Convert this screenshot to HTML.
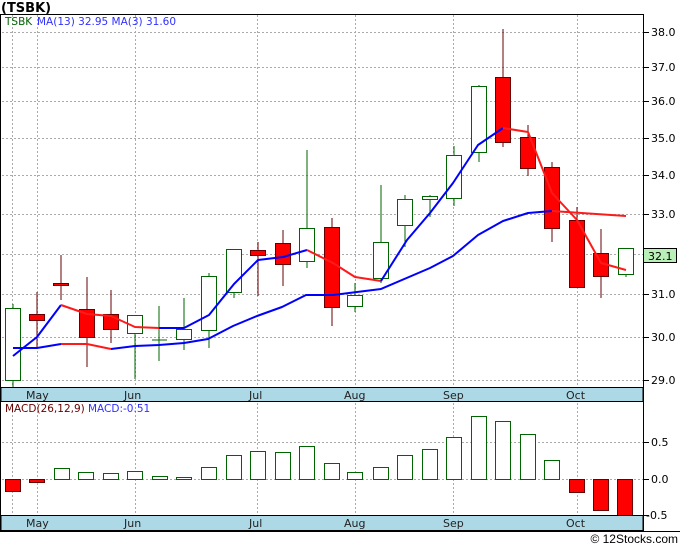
<!DOCTYPE html>
<html><head><meta charset="utf-8"><style>
body{margin:0;background:#fff;width:680px;height:546px;overflow:hidden;font-family:"DejaVu Sans","Liberation Sans",sans-serif}
svg text{font-family:"DejaVu Sans","Liberation Sans",sans-serif}
</style></head><body>
<svg width="680" height="546" viewBox="0 0 680 546" xmlns="http://www.w3.org/2000/svg">
<rect x="0" y="0" width="680" height="546" fill="#fff"/>
<text x="1" y="12" font-size="13" font-weight="bold" fill="#000">(TSBK)</text>
<g stroke="#aaa" stroke-dasharray="2,2" stroke-width="1">
<line x1="2" x2="643" y1="32.5" y2="32.5"/><line x1="2" x2="643" y1="67.5" y2="67.5"/><line x1="2" x2="643" y1="101.5" y2="101.5"/><line x1="2" x2="643" y1="138.5" y2="138.5"/><line x1="2" x2="643" y1="175.5" y2="175.5"/><line x1="2" x2="643" y1="214.5" y2="214.5"/><line x1="2" x2="643" y1="254.5" y2="254.5"/><line x1="2" x2="643" y1="294.5" y2="294.5"/><line x1="2" x2="643" y1="337.5" y2="337.5"/><line x1="2" x2="643" y1="380.5" y2="380.5"/>
<line x1="2" x2="643" y1="442.5" y2="442.5"/><line x1="2" x2="643" y1="479.5" y2="479.5"/>
<g>
<line x1="12.5" x2="12.5" y1="15" y2="530"/><line x1="37.5" x2="37.5" y1="15" y2="530"/><line x1="135.5" x2="135.5" y1="15" y2="530"/><line x1="257.5" x2="257.5" y1="15" y2="530"/><line x1="355.5" x2="355.5" y1="15" y2="530"/><line x1="453.5" x2="453.5" y1="15" y2="530"/><line x1="577.5" x2="577.5" y1="15" y2="530"/>
</g></g>
<text x="5" y="25" font-size="10.5" fill="#006400">TSBK</text>
<text x="37" y="25" font-size="10.5" fill="#3030ff">MA(13)  32.95  MA(3)  31.60</text>
<g stroke-width="1">
<g stroke="#006400" fill="#fff">
<line x1="13" x2="13" y1="304" y2="387"/><rect x="5.5" y="308.5" width="15" height="72"/>
<line x1="135" x2="135" y1="315" y2="379"/><rect x="127.5" y="315.5" width="15" height="18"/>
<line x1="159" x2="159" y1="306" y2="361"/><line x1="152" x2="167" y1="340" y2="340"/>
<line x1="184" x2="184" y1="298" y2="350"/><rect x="176.5" y="329.5" width="15" height="10"/>
<line x1="209" x2="209" y1="273" y2="348"/><rect x="201.5" y="276.5" width="15" height="54"/>
<line x1="234" x2="234" y1="249" y2="298"/><rect x="226.5" y="249.5" width="15" height="43"/>
<line x1="307" x2="307" y1="150" y2="268"/><rect x="299.5" y="228.5" width="15" height="33"/>
<line x1="355" x2="355" y1="283" y2="312"/><rect x="347.5" y="295.5" width="15" height="11"/>
<line x1="381" x2="381" y1="185" y2="283"/><rect x="373.5" y="242.5" width="15" height="36"/>
<line x1="405" x2="405" y1="195" y2="247"/><rect x="397.5" y="199.5" width="15" height="26"/>
<line x1="430" x2="430" y1="195" y2="217"/><rect x="422.5" y="196.5" width="15" height="3"/>
<line x1="454" x2="454" y1="146" y2="206"/><rect x="446.5" y="155.5" width="15" height="43"/>
<line x1="479" x2="479" y1="85" y2="162"/><rect x="471.5" y="86.5" width="15" height="66"/>
<line x1="626" x2="626" y1="248" y2="277"/><rect x="618.5" y="248.5" width="15" height="26"/>
</g>
<g stroke="#600" fill="#f00">
<line x1="37" x2="37" y1="292" y2="347"/><rect x="29.5" y="314.5" width="15" height="6"/>
<line x1="61" x2="61" y1="255" y2="300"/><rect x="53.5" y="283.5" width="15" height="2"/>
<line x1="87" x2="87" y1="277" y2="367"/><rect x="79.5" y="309.5" width="15" height="28"/>
<line x1="111" x2="111" y1="290" y2="343"/><rect x="103.5" y="314.5" width="15" height="15"/>
<line x1="258" x2="258" y1="242" y2="296"/><rect x="250.5" y="250.5" width="15" height="5"/>
<line x1="283" x2="283" y1="230" y2="286"/><rect x="275.5" y="243.5" width="15" height="21"/>
<line x1="332" x2="332" y1="218" y2="326"/><rect x="324.5" y="227.5" width="15" height="80"/>
<line x1="503" x2="503" y1="29" y2="147"/><rect x="495.5" y="77.5" width="15" height="65"/>
<line x1="528" x2="528" y1="125" y2="176"/><rect x="520.5" y="137.5" width="15" height="31"/>
<line x1="552" x2="552" y1="162" y2="242"/><rect x="544.5" y="167.5" width="15" height="61"/>
<line x1="577" x2="577" y1="207" y2="288"/><rect x="569.5" y="220.5" width="15" height="67"/>
<line x1="601" x2="601" y1="229" y2="298"/><rect x="593.5" y="253.5" width="15" height="23"/>
</g></g>
<g fill="none" stroke-width="2" stroke-linejoin="round">
<polyline stroke="#0000ff" points="13,356 37,337 61,305"/>
<polyline stroke="#ff1a1a" points="61,305 87,314 111,316 135,327 159,328"/>
<polyline stroke="#0000ff" points="159,328 184,328 209,315 234,284 258,260 283,257 307,250"/>
<polyline stroke="#ff1a1a" points="307,250 333,263 355,277 381,281"/>
<polyline stroke="#0000ff" points="381,281 407,240 430,213 453,183 478,145 503,128"/>
<polyline stroke="#ff1a1a" points="503,128 528,132 552,193 577,220 601,263 626,270"/>
<polyline stroke="#0000ff" points="13,348 37,348 61,344"/>
<polyline stroke="#ff1a1a" points="61,344 87,344 111,349"/>
<polyline stroke="#0000ff" points="111,349 135,346 159,345 184,343 208,339 233,326 257,316 282,307 306,295 333,295 381,289 430,268 453,256 478,235 503,221 528,213 552,211"/>
<polyline stroke="#ff1a1a" points="552,211 626,216"/>
</g>
<g stroke="#006400" fill="#fff">
<rect x="54.5" y="468.5" width="15" height="11"/><rect x="78.5" y="472.5" width="15" height="7"/><rect x="103.5" y="473.5" width="15" height="6"/><rect x="127.5" y="471.5" width="15" height="8"/><rect x="152.5" y="476.5" width="15" height="3"/><rect x="176.5" y="477.5" width="15" height="2"/><rect x="201.5" y="467.5" width="15" height="12"/><rect x="226.5" y="455.5" width="15" height="24"/><rect x="250.5" y="451.5" width="15" height="28"/><rect x="275.5" y="452.5" width="15" height="27"/><rect x="299.5" y="446.5" width="15" height="33"/><rect x="324.5" y="463.5" width="15" height="16"/><rect x="347.5" y="472.5" width="15" height="7"/><rect x="373.5" y="467.5" width="15" height="12"/><rect x="397.5" y="455.5" width="15" height="24"/><rect x="422.5" y="449.5" width="15" height="30"/><rect x="446.5" y="437.5" width="15" height="42"/><rect x="471.5" y="416.5" width="15" height="63"/><rect x="495.5" y="421.5" width="15" height="58"/><rect x="520.5" y="434.5" width="15" height="45"/><rect x="544.5" y="460.5" width="15" height="19"/>
</g>
<g stroke="#600" fill="#f00">
<rect x="5.5" y="479.5" width="15" height="12"/><rect x="29.5" y="479.5" width="15" height="3"/><rect x="569.5" y="479.5" width="15" height="13"/><rect x="593.5" y="479.5" width="15" height="31"/><rect x="617.5" y="479.5" width="15" height="36"/>
</g>
<text x="5" y="412" font-size="10.5" fill="#600">MACD(26,12,9)</text>
<text x="88" y="412" font-size="10.5" fill="#3030ff">MACD:-0.51</text>
<rect x="1" y="387.5" width="642" height="14" fill="#add8e6" stroke="#000"/>
<rect x="1" y="515.5" width="642" height="15" fill="#add8e6" stroke="#000"/>
<g font-size="11" fill="#222">
<text x="26" y="399">May</text><text x="124" y="399">Jun</text><text x="249" y="399">Jul</text><text x="344" y="399">Aug</text><text x="443" y="399">Sep</text><text x="566" y="399">Oct</text>
<text x="26" y="527">May</text><text x="124" y="527">Jun</text><text x="249" y="527">Jul</text><text x="344" y="527">Aug</text><text x="443" y="527">Sep</text><text x="566" y="527">Oct</text>
</g>
<line x1="0.5" x2="0.5" y1="14" y2="531" stroke="#000"/>
<line x1="0" x2="643" y1="14.5" y2="14.5" stroke="#000"/>
<line x1="643.5" x2="643.5" y1="14" y2="531" stroke="#000"/>
<line x1="0" x2="680" y1="531.5" y2="531.5" stroke="#000"/>
<g stroke="#000">
<line x1="643" x2="649" y1="32.5" y2="32.5"/><line x1="643" x2="649" y1="67.5" y2="67.5"/><line x1="643" x2="649" y1="101.5" y2="101.5"/><line x1="643" x2="649" y1="138.5" y2="138.5"/><line x1="643" x2="649" y1="175.5" y2="175.5"/><line x1="643" x2="649" y1="214.5" y2="214.5"/><line x1="643" x2="649" y1="254.5" y2="254.5"/><line x1="643" x2="649" y1="294.5" y2="294.5"/><line x1="643" x2="649" y1="337.5" y2="337.5"/><line x1="643" x2="649" y1="380.5" y2="380.5"/>
<line x1="643" x2="649" y1="442.5" y2="442.5"/><line x1="643" x2="649" y1="479.5" y2="479.5"/><line x1="643" x2="649" y1="515.5" y2="515.5"/>
</g>
<g font-size="11" fill="#000">
<text x="651" y="36">38.0</text><text x="651" y="71">37.0</text><text x="651" y="105">36.0</text><text x="651" y="142">35.0</text><text x="651" y="179">34.0</text><text x="651" y="218">33.0</text><text x="651" y="298">31.0</text><text x="651" y="341">30.0</text><text x="651" y="384">29.0</text>
<text x="651" y="446">0.5</text><text x="651" y="483">0.0</text><text x="646" y="519">-0.5</text>
</g>
<rect x="643.5" y="248.5" width="33" height="14" fill="#b8f0b8" stroke="#000"/>
<text x="648" y="260" font-size="11" fill="#000">32.1</text>
<text x="678" y="543" font-size="12" fill="#000" text-anchor="end" style="font-family:'Liberation Sans',sans-serif">© 12Stocks.com</text>
</svg>
</body></html>
